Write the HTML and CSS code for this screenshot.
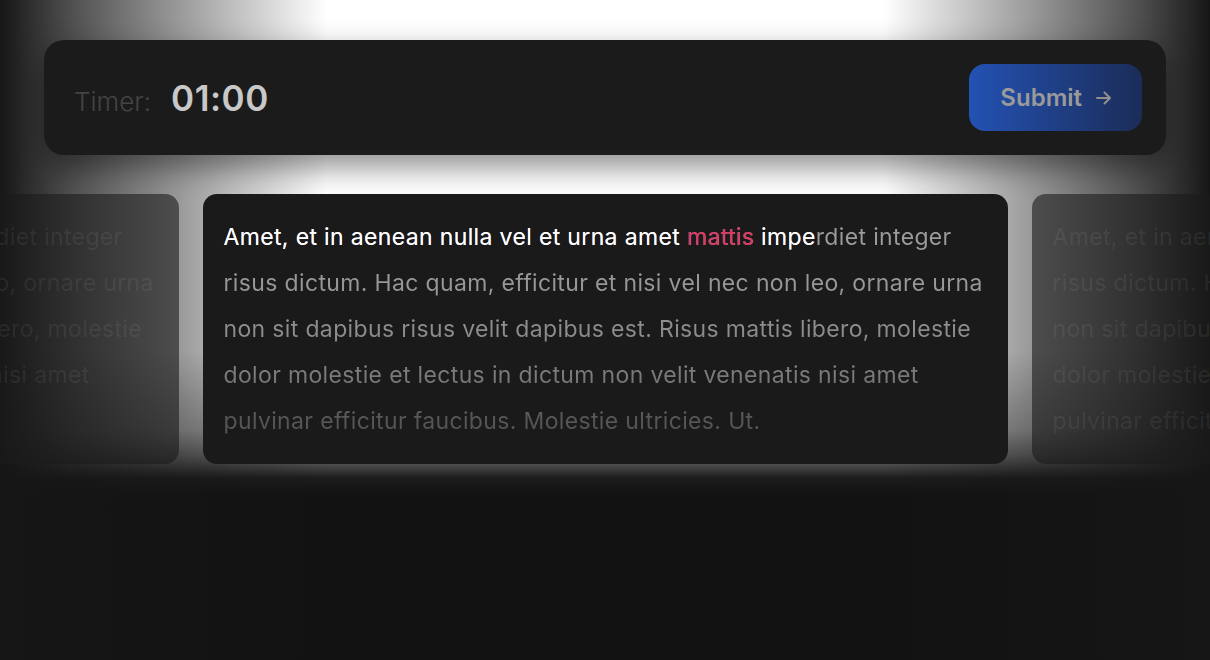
FILE: index.html
```html
<!DOCTYPE html>
<html lang="en">
<head>
    <meta charset="UTF-8">
    <meta name="viewport" content="width=device-width, initial-scale=1.0">
    <title>Typing Test</title>
    <link rel="stylesheet" href="styles.css">
</head>
<body>
    <div class="page">
        <header class="top-bar">
            <div class="timer">
                <span class="timer-label">Timer:</span>
                <span class="timer-value">01:00</span>
            </div>
            <button class="submit-btn">
                Submit
                <svg class="arrow" width="18" height="16" viewBox="0 0 18 16" fill="none">
                    <path d="M2 8h13M9.5 2.5L15 8l-5.5 5.5" stroke="currentColor" stroke-width="2" stroke-linecap="round" stroke-linejoin="round"/>
                </svg>
            </button>
        </header>

        <div class="cards">
            <div class="card card-side">
                <p class="card-text">Amet, et in aenean nulla vel et urna amet mattis imperdiet integer<br>risus dictum. Hac quam, efficitur et nisi vel nec non leo, ornare urna<br>non sit dapibus risus velit dapibus est. Risus mattis libero, molestie<br>dolor molestie et lectus in dictum non velit venenatis nisi amet<br>pulvinar efficitur faucibus. Molestie ultricies. Ut.</p>
            </div>
            <div class="card card-main">
                <p class="card-text"><span class="typed">Amet, et in aenean nulla vel et urna amet </span><span class="wrong">mattis</span><span class="typed"> impe</span>rdiet integer<br>risus dictum. Hac quam, efficitur et nisi vel nec non leo, ornare urna<br>non sit dapibus risus velit dapibus est. Risus mattis libero, molestie<br>dolor molestie et lectus in dictum non velit venenatis nisi amet<br>pulvinar efficitur faucibus. Molestie ultricies. Ut.</p>
            </div>
            <div class="card card-side">
                <p class="card-text">Amet, et in aenean nulla vel et urna amet mattis imperdiet integer<br>risus dictum. Hac quam, efficitur et nisi vel nec non leo, ornare urna<br>non sit dapibus risus velit dapibus est. Risus mattis libero, molestie<br>dolor molestie et lectus in dictum non velit venenatis nisi amet<br>pulvinar efficitur faucibus. Molestie ultricies. Ut.</p>
            </div>
        </div>
    </div>
</body>
</html>
```

FILE: styles.css
```css
body {
    margin: 0;
    min-height: 100vh;
    background-color: #121212;
    background-image:
        linear-gradient(to right, #161616 0%, rgba(22, 22, 22, 0.75) 6%, rgba(22, 22, 22, 0) 27%, rgba(22, 22, 22, 0) 73%, rgba(22, 22, 22, 0.75) 94%, #161616 100%),
        linear-gradient(to bottom, #fff 0, #fff 350px, #b0b0b0 430px, #6e6e6e 455px, #1c1c1c 478px, #121212 495px);
    font-family: 'Inter', 'Liberation Sans', sans-serif;
    overflow: hidden;
}

.page {
    padding: 40px 44px 0;
}

/* Timer bar */
.top-bar {
    display: flex;
    align-items: center;
    justify-content: space-between;
    padding: 24px 24px 24px 30px;
    background-color: #1b1b1b;
    border-radius: 20px;
    box-shadow: 0 12px 30px rgba(0, 0, 0, 0.45);
}
.timer {
    display: flex;
    align-items: baseline;
    gap: 20px;
}
.timer-label {
    font-size: 26px;
    font-weight: 300;
    color: #444;
}
.timer-value {
    font-size: 35px;
    font-weight: 600;
    color: #c8c8c8;
    letter-spacing: 0.5px;
}
.submit-btn {
    display: flex;
    align-items: center;
    gap: 13px;
    height: 67px;
    padding: 0 29px 0 31px;
    border: none;
    border-radius: 16px;
    background: linear-gradient(to right, #2352b3, #1b2c58);
    color: #9a9a9a;
    font-family: inherit;
    font-size: 24px;
    font-weight: 600;
}
.arrow {
    color: #8f8f8f;
}

/* Text cards */
.cards {
    display: flex;
    justify-content: center;
    gap: 24px;
    margin: 39px -44px 0;
}
.card {
    flex: 0 0 805px;
    box-sizing: border-box;
    height: 270px;
    padding: 20px 21px;
    border-radius: 14px;
}
.card-main {
    background-color: #1a1a1a;
}
.card-side {
    background-color: rgba(26, 26, 26, 0.6);
}
.card-text {
    margin: 0;
    font-size: 23px;
    letter-spacing: 0.35px;
    line-height: 46px;
    white-space: nowrap;
}
.card-main .card-text {
    /* Noch nicht getippter Text blendet nach unten aus */
    background: linear-gradient(to bottom, #9c9c9c 23px, #989898 69px, #8d8d8d 115px, #7b7b7b 161px, #555 207px);
    -webkit-background-clip: text;
    background-clip: text;
    color: transparent;
}
.card-side .card-text {
    color: rgba(255, 255, 255, 0.08);
}
.typed {
    color: #fff;
}
.wrong {
    color: #d83a64;
}
```
